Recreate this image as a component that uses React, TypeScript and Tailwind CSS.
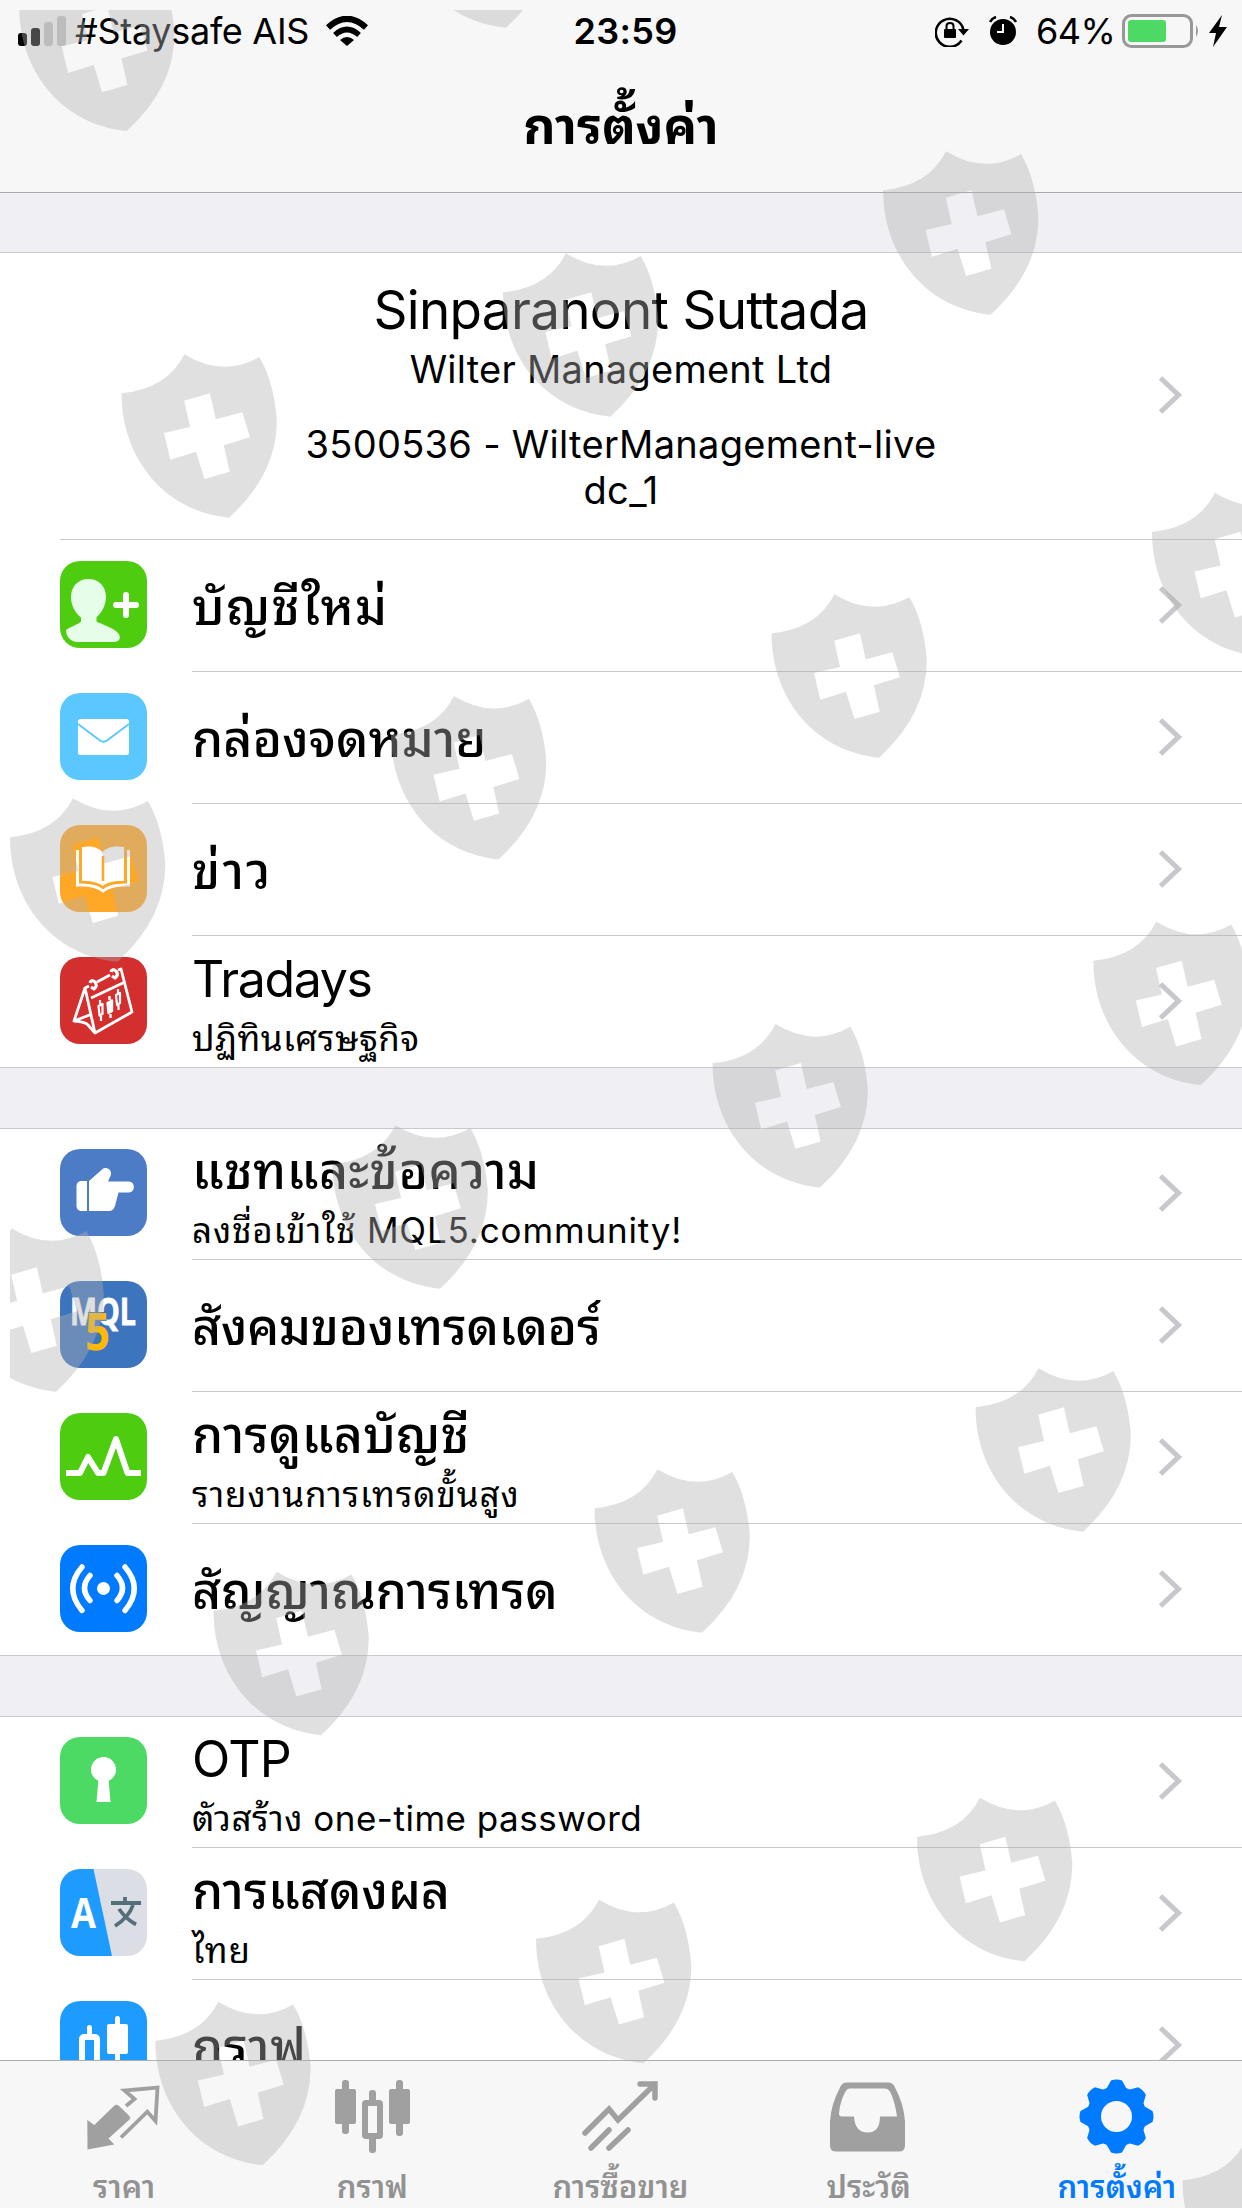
const ICON = "mt-[21px] size-[87px] shrink-0 rounded-[20px]";

const SHIELDS = [
  [18.7, -32.7], [398, -136], [882.6, 151], [502.4, 253], [121, 354],
  [1151.5, 492.5], [771, 594], [390.5, 695.7], [9.5, 798],
  [1092.8, 921.4], [712, 1023.8], [332, 1125], [-52, 1228],
  [975, 1368], [594, 1469], [213, 1571.5],
  [916.5, 1797.5], [535.5, 1899.5], [154.8, 2001.4], [1182, 2141],
];

const AccountIcon = () => (
  <svg className={`${ICON} bg-[#4ecc10]`} viewBox="0 0 87 87" fill="#e6fdea">
    <path d="M28.500 18C39 18 46 25.500 46 36C46 45 41 52 36.500 56.500V60.500C42 63.500 54 67 58 72C62 77 59 81 54 81H18C10 81 6 75 6 69C11 65.500 19 63 21 60.500V56.500C15.500 52 11 45 11 36C11 25.500 18 18 28.500 18Z" />
    <path d="M56 44H76M66 34V54" stroke="#fff" strokeWidth="6" strokeLinecap="round" />
  </svg>
);

const MailIcon = () => (
  <svg className={`${ICON} bg-[#5ac8ff]`} viewBox="0 0 87 87">
    <rect x="18" y="26" width="51" height="36" rx="2.500" fill="#fff" />
    <path d="M18 31L40 47.500Q43.500 50 47 47.500L69 31" fill="none" stroke="#5ac8ff" strokeWidth="2" />
  </svg>
);

const NewsIcon = () => (
  <svg className={`${ICON} bg-[#ffa726]`} viewBox="0 0 87 87" fill="#fff">
    <path d="M22 22C30 20.500 38 22 42.500 27C47 22 55 20.500 64 22V56C55 55.500 47 57 43 61C38 57 30 55.500 22 56Z" />
    <path d="M43 31V56" stroke="#ffa726" strokeWidth="2.500" />
    <path d="M17.500 25V60C28 59.500 37 60.500 43 66C49 60.500 58 59.500 68.500 60V25" fill="none" stroke="#fff" strokeWidth="3" />
  </svg>
);

const TradaysIcon = () => (
  <svg className={`${ICON} bg-[#d32f2f]`} viewBox="0 0 87 87" fill="none" stroke="#fff" strokeWidth="2.800" strokeLinejoin="round">
    <path d="M29 29L25 31L35 76L72 55L61 12L58 13M37 25L50 18M31 41L65 25M25 31L14 64L32 57M14 64Q26 65 28 68L35 76" />
    <path d="M30 26Q31 22 35 25Q38 29 34 32L31 30M51 15Q52 11 56 14Q59 18 55 21L52 19" strokeWidth="3.200" />
    <path d="M38.500 49L42.500 47V57L39.500 58.500ZM40 43V47M41 59V64M56 38L60 36V46L57 48ZM58 32V36M58.500 48V53" strokeWidth="2.200" />
    <path d="M47.500 46L52 43.500V54L48.500 56ZM49.500 39V43M50.500 57V61" fill="#fff" strokeWidth="2.400" />
  </svg>
);

const ChatIcon = () => (
  <svg className={`${ICON} bg-[#4d7cc7]`} viewBox="0 0 87 87" fill="#fff">
    <path d="M27 32H20.500Q16.500 33 16.500 37V57Q16.500 61 20.500 62H27Z" />
    <path d="M29 32L42 20.500C47 16.500 53 21.500 50.500 27L48 32.500H69C75.500 33 75.500 43 69 43.500H58.500L55 57Q53.500 62 49 62H29Z" />
  </svg>
);

const MqlIcon = () => (
  <svg className={`${ICON} bg-[#3d74be]`} viewBox="0 0 87 87" fontFamily="'Open Sans', sans-serif" fontWeight="700">
    <text x="10" y="44" fontSize="37" fill="#fff" stroke="#fff" strokeWidth="0.800" textLength="66" lengthAdjust="spacingAndGlyphs">MQL</text>
    <text x="25" y="69" fontSize="52" fill="#ffb900" stroke="#3d74be" strokeWidth="2" paintOrder="stroke" textLength="25" lengthAdjust="spacingAndGlyphs">5</text>
  </svg>
);

const MonitorIcon = () => (
  <svg className={`${ICON} bg-[#4ecc10]`} viewBox="0 0 87 87" fill="none" stroke="#fff" strokeWidth="6" strokeLinejoin="round">
    <path d="M6 60H20L28 44L38 60H43.500L56 26L67.500 60H81" />
  </svg>
);

const SignalsIcon = () => (
  <svg className={`${ICON} bg-[#007aff]`} viewBox="0 0 87 87" fill="none" stroke="#fff" strokeWidth="5.500" strokeLinecap="round">
    <circle cx="43.500" cy="43.500" r="6.500" fill="#fff" stroke="none" />
    <path d="M22 22Q3.500 43.500 22 65.500M30 30.500Q19 43 30 55.500M57 30.500Q68 43 57 55.500M65 22Q83.500 43.500 65 65.500" />
  </svg>
);

const OtpIcon = () => (
  <svg className={`${ICON} bg-[#4cd964]`} viewBox="0 0 87 87" fill="#fff">
    <circle cx="43.500" cy="32.500" r="12.500" />
    <path d="M38.500 42H48.500L50.500 65H36.500Z" />
  </svg>
);

const DisplayIcon = () => (
  <svg className={`${ICON} bg-[#dcdee6]`} viewBox="0 0 87 87">
    <path d="M0 0H33.500L52 87H0Z" fill="#1e9bff" />
    <text x="11" y="59" fontSize="41" fontWeight="700" fontFamily="'Open Sans', sans-serif" fill="#fff" textLength="25" lengthAdjust="spacingAndGlyphs">A</text>
    <path d="M51 34H81M65 28V34M73 36Q69 48 55 57M59 40Q66 50 76 55.500" fill="none" stroke="#546e7a" strokeWidth="3.800" />
  </svg>
);

const ChartIcon = () => (
  <svg className={`${ICON} bg-[#1e9bff]`} viewBox="0 0 87 87" fill="#fff">
    <rect x="47" y="23" width="21" height="30" rx="2" />
    <rect x="55" y="15" width="5" height="60" rx="2.500" />
    <rect x="27" y="24" width="5" height="12" rx="2.500" />
    <rect x="22" y="36" width="15" height="32" rx="2" fill="#1e9bff" stroke="#fff" strokeWidth="6" />
  </svg>
);

type Row = {
  title: string;
  subtitle?: string;
  icon: () => React.JSX.Element;
  titleClass?: string;
  subtitleClass?: string;
};

const GROUPS: Row[][] = [
  [
    { title: "บัญชีใหม่", icon: AccountIcon, titleClass: "tracking-[1.3px] font-medium" },
    { title: "กล่องจดหมาย", icon: MailIcon },
    { title: "ข่าว", icon: NewsIcon, titleClass: "tracking-[2.5px] font-medium" },
    {
      title: "Tradays",
      subtitle: "ปฏิทินเศรษฐกิจ",
      icon: TradaysIcon,
      titleClass: "tracking-[-1.3px] font-normal",
    },
  ],
  [
    {
      title: "แชทและข้อความ",
      subtitle: "ลงชื่อเข้าใช้ MQL5.community!",
      icon: ChatIcon,
      titleClass: "tracking-[0.5px] font-medium",
      subtitleClass: "tracking-[0.85px]",
    },
    { title: "สังคมของเทรดเดอร์", icon: MqlIcon, titleClass: "tracking-[-0.35px] font-medium" },
    {
      title: "การดูแลบัญชี",
      subtitle: "รายงานการเทรดขั้นสูง",
      icon: MonitorIcon,
      titleClass: "tracking-[0.3px] font-medium",
      subtitleClass: "tracking-[0.9px]",
    },
    { title: "สัญญาณการเทรด", icon: SignalsIcon },
  ],
  [
    {
      title: "OTP",
      subtitle: "ตัวสร้าง one-time password",
      icon: OtpIcon,
      titleClass: "tracking-[-0.6px] font-normal",
      subtitleClass: "tracking-[0.5px]",
    },
    { title: "การแสดงผล", subtitle: "ไทย", icon: DisplayIcon, subtitleClass: "tracking-[0.9px]" },
    { title: "กราฟ", icon: ChartIcon, titleClass: "tracking-[0.5px] font-medium" },
  ],
];

const Chevron = () => (
  <svg className="mr-[58px] mb-[2px] h-[40px] w-[26px] shrink-0" viewBox="0 0 26 40" fill="none">
    <path d="M2.500 3L20.500 20L2.500 37" stroke="#c7c7cc" strokeWidth="5" />
  </svg>
);

const SettingsRow = ({ row, last }: { row: Row; last: boolean }) => {
  const Icon = row.icon;
  return (
    <div className="flex h-[132px] items-start pl-[60px]">
      <Icon />
      <div
        className={`ml-[45px] flex h-full min-w-0 flex-1 items-center ${
          last ? "" : "border-b border-[#c8c7cc]"
        }`}
      >
        <div className="flex h-full flex-1 flex-col whitespace-nowrap">
          <p
            className={`text-[50px] leading-[60px] ${row.subtitle ? "pt-[13px]" : "pt-[37px]"} ${row.titleClass ?? "font-medium"}`}
          >
            {row.title}
          </p>
          {row.subtitle && (
            <p className={`mt-[4px] text-[35px] leading-[50px] ${row.subtitleClass ?? "tracking-[0.4px]"}`}>
              {row.subtitle}
            </p>
          )}
        </div>
        <Chevron />
      </div>
    </div>
  );
};

const TABS = [
  {
    label: "ราคา",
    icon: (
      <g transform="translate(-1.500 0)">
        <path d="M11.800 42L18.800 47L39 27.500Q41 26 43 27.500L53.500 37.500Q55.500 39.500 54 41.500L33 60.500L38.800 66.500L12 71.500Z" fill="#a0a0a0" />
        <path d="M50.500 28L59 21L49 12.500L82 9.500L80 43L71.800 33.700L45.500 59.500" fill="none" stroke="#a0a0a0" strokeWidth="3.800" />
      </g>
    ),
  },
  {
    label: "กราฟ",
    icon: (
      <g fill="#a0a0a0">
        <rect x="10" y="11" width="21" height="35" rx="2" />
        <rect x="17" y="2" width="7" height="54" rx="3" />
        <rect x="64" y="11" width="21" height="35" rx="2" />
        <rect x="71" y="2" width="7" height="56" rx="3" />
        <rect x="44" y="12" width="7" height="12" rx="3" />
        <rect x="44" y="56" width="7" height="19" rx="3" />
        <rect x="40" y="25" width="15" height="33" rx="1" fill="none" stroke="#a0a0a0" strokeWidth="6" />
      </g>
    ),
  },
  {
    label: "การซื้อขาย",
    icon: (
      <path d="M12 55L36 31L45 42L82 6M67 6H82V20M18 70L36 52M36 70L55 52" fill="none" stroke="#a0a0a0" strokeWidth="5.500" strokeLinecap="round" />
    ),
  },
  {
    label: "ประวัติ",
    icon: (
      <path transform="translate(-1 1.500)" fillRule="evenodd" fill="#a0a0a0" d="M27 3H68Q73 3 75 8Q84 25 85 42V66Q85 72 79 72H16Q10 72 10 66V42Q11 25 20 8Q22 3 27 3ZM30 9Q27 9 25 13Q20 22 19 34Q19 37 22 37H34Q35 53 47.500 53Q60 53 60 37H77L76 31Q74 20 70 12Q68 9 65 9Z" />
    ),
  },
  {
    label: "การตั้งค่า",
    active: true,
    icon: (
      <g fill="#007aff" transform="translate(0 1.500)">
        {[0, 45, 90, 135].map((angle) => (
          <path key={angle} d="M37 10L42 1Q47.500 -1 53 1L58 10V64L53 73Q47.500 75 42 73L37 64Z" transform={`rotate(${angle} 47.500 37)`} />
        ))}
        <circle cx="47.500" cy="37" r="30" />
        <circle cx="47.500" cy="37" r="15.500" fill="#f7f7f7" />
      </g>
    ),
  },
];

const StatusBar = () => (
  <div className="grid h-[60px] grid-cols-3 items-center text-[36px] leading-[60px] whitespace-nowrap">
    <div className="flex items-center pl-[18px]">
      <svg className="h-[30px] w-[48px]" viewBox="0 0 48 30">
        <rect x="0" y="17" width="9" height="13" rx="3" />
        <rect x="13" y="12" width="9" height="18" rx="3" />
        <rect x="26" y="6" width="9" height="24" rx="3" fill="#c4c4c4" />
        <rect x="39" y="0" width="9" height="30" rx="3" fill="#c4c4c4" />
      </svg>
      <span className="ml-[9px] w-[251px] leading-[58px] tracking-[-0.3px]">#Staysafe AIS</span>
      <svg className="h-[30px] w-[42px]" viewBox="0 0 42 30" fill="none" stroke="#000">
        <path d="M2 11.500Q21 -6 40 11.500" strokeWidth="6" />
        <path d="M9 19Q21 8 33 19" strokeWidth="5.500" />
        <path d="M14 24Q21 18 28 24L21 30Z" fill="#000" stroke="none" />
      </svg>
    </div>
    <div className="pt-px pl-[9px] text-center font-semibold tracking-[0.3px]">23:59</div>
    <div className="flex items-center justify-end pr-[15px]">
      <svg className="h-[32px] w-[34px]" viewBox="0 0 34 32" fill="none" stroke="#000" strokeWidth="2.500">
        <path d="M26.500 25.500A14 14 0 1 1 28.500 15" />
        <path d="M23 14H34L28.500 20.500Z" fill="#000" stroke="none" />
        <rect x="9" y="14" width="12" height="9" rx="1" fill="#000" stroke="none" />
        <path d="M11.500 14V11Q11.500 8 15 8Q18.500 8 18.500 11V14" strokeWidth="2" />
      </svg>
      <svg className="ml-[20px] h-[30px] w-[28px]" viewBox="0 0 28 30">
        <circle cx="14" cy="16" r="13" />
        <path d="M1 6Q3 2 7 1M27 6Q25 2 21 1" stroke="#000" strokeWidth="2.500" fill="none" />
        <path d="M14 8V16H8" stroke="#fff" strokeWidth="2" fill="none" />
      </svg>
      <span className="ml-[19px] w-[86px] pt-px tracking-[-0.6px]">64%</span>
      <svg className="h-[34px] w-[79px]" viewBox="0 0 79 34">
        <rect x="1.500" y="1.500" width="68" height="31" rx="8" fill="none" stroke="#989898" strokeWidth="3" />
        <rect x="6" y="6" width="38" height="22" rx="3" fill="#4cd964" />
        <path d="M74 11Q78 17 74 23Z" fill="#989898" />
      </svg>
      <svg className="ml-[8px] h-[32px] w-[18px]" viewBox="0 0 18 32">
        <path d="M13 0L0 18H7L4 32L18 12H10Z" />
      </svg>
    </div>
  </div>
);

export default function App() {
  return (
    <div className="relative flex h-[2208px] w-[1242px] flex-col overflow-hidden bg-white font-['Inter','Thonburi','Noto_Sans_Thai_Looped','Noto_Looped_Thai','Loma','Garuda','Umpush','Waree','Noto_Sans_Thai',sans-serif] text-black">
      <header className="h-[193px] shrink-0 border-b border-[#a9a9ad] bg-[#f7f7f7]">
        <StatusBar />
        <h1 className="pt-[36px] text-center text-[50px] leading-[60px] font-bold">การตั้งค่า</h1>
      </header>

      <main className="min-h-0 flex-1 overflow-hidden">
        <div className="h-[60px] border-b border-[#c8c7cc] bg-[#efeff4]" />
        <div className="flex h-[287px]">
          <div className="ml-[60px] flex flex-1 items-center border-b border-[#c8c7cc]">
            <div className="ml-[24px] h-full flex-1 pt-[26px] text-center text-[38px] leading-[46px] whitespace-nowrap">
              <p className="text-[53px] leading-[62px] tracking-[-0.7px]">Sinparanont Suttada</p>
              <p className="mt-[5px] tracking-[0.25px]">Wilter Management Ltd</p>
              <p className="mt-[29px] tracking-[0.28px]">3500536 - WilterManagement-live</p>
              <p className="tracking-[0.33px]">dc_1</p>
            </div>
            <Chevron />
          </div>
        </div>
        {GROUPS.map((rows, index) => (
          <section key={rows[0].title}>
            {index > 0 && <div className="-my-px h-[62px] border-y border-[#c8c7cc] bg-[#efeff4]" />}
            {rows.map((row, i) => (
              <SettingsRow key={row.title} row={row} last={i === rows.length - 1} />
            ))}
          </section>
        ))}
      </main>

      <nav className="grid h-[148px] shrink-0 grid-cols-5 border-t border-[#aeaeae] bg-[#f7f7f7] pt-[17px] pr-px">
        {TABS.map((tab) => (
          <div key={tab.label} className={`flex flex-col items-center ${tab.active ? "text-[#007aff]" : "text-[#929292]"}`}>
            <svg className="h-[76px] w-[95px]" viewBox="0 0 95 76">{tab.icon}</svg>
            <span className="mt-[13px] text-[31px] leading-[40px] font-semibold whitespace-nowrap">{tab.label}</span>
          </div>
        ))}
      </nav>

      <svg className="pointer-events-none absolute inset-0 h-[2208px] w-[1242px]" viewBox="0 0 1242 2208">
        <defs>
          <clipPath id="safe">
            <rect x="10" y="10" width="1232" height="2198" />
          </clipPath>
        </defs>
        <g clipPath="url(#safe)" fill="#b2b2b2" fillOpacity="0.4" fillRule="evenodd">
          {SHIELDS.map(([x, y]) => (
            <path
              key={`${x}-${y}`}
              transform={`translate(${x} ${y})`}
              d="M.6 39.300Q46 35 63.500 .3Q102 24 138.400 3Q153 28 155.800 66Q156 120 108 163.700C40 157 0 100 .6 39.300ZM63.200 46.700L88.900 39.300L94.800 65.300L121.400 58.300L128.900 83.300L102.800 91.300L108.700 117.700L83.400 125L75 97.700L49.300 105.700L43 79L69.100 73Z"
            />
          ))}
        </g>
      </svg>
    </div>
  );
}
